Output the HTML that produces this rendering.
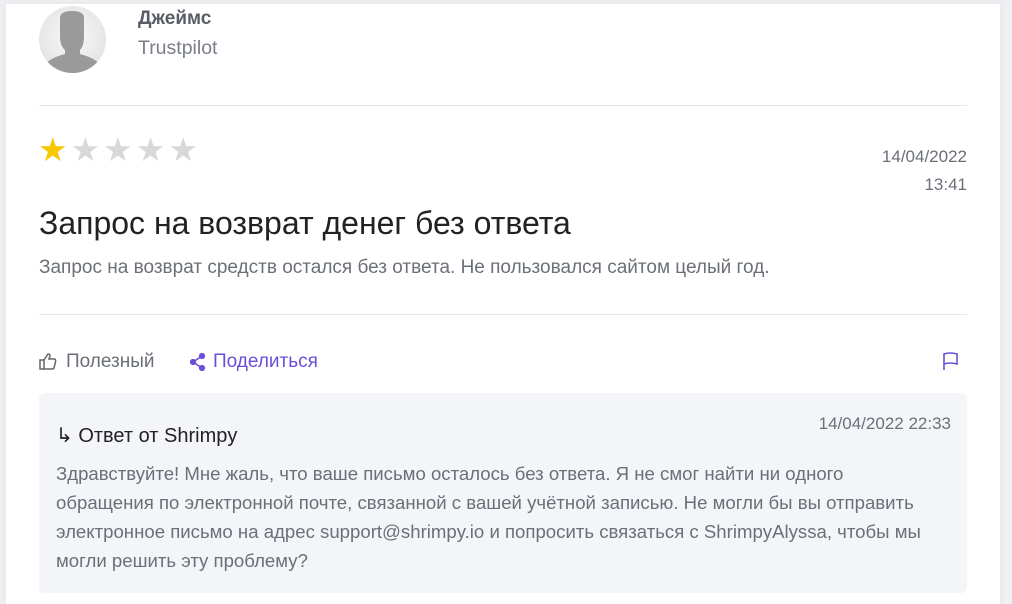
<!DOCTYPE html>
<html><head><meta charset="utf-8"><style>
*{margin:0;padding:0;box-sizing:border-box}
body{width:1012px;height:571px;overflow:hidden;background:#eef0f3;font-family:"Liberation Sans",sans-serif;position:relative}
.card{position:absolute;left:6px;top:4px;width:994px;height:600px;background:#fff;box-shadow:0 0 8px rgba(0,0,0,.06)}
.a{position:absolute;white-space:nowrap}
.hr{position:absolute;left:39px;width:928px;height:1px;background:#e6e6e6}
.g{color:#6b6f78}
</style></head><body>
<div class="card"></div>
<div class="a" style="left:39px;top:6px;width:67px;height:67px;border-radius:50%;background:radial-gradient(circle at 50% 45%,#fafafa,#dcdcdc);overflow:hidden">
<svg width="67" height="67" viewBox="0 0 67 67"><path d="M21 12 Q21 5 33 5 Q45 5 45 12 L45 30 Q45 40 41 44 L41 48 Q56 52 60 58 L62 67 L5 67 L7 58 Q11 52 26 48 L26 44 Q21 40 21 30 Z" fill="#9a9a9a"/></svg></div>
<div class="a" style="left:138px;top:8px;font-size:19px;font-weight:bold;color:#5a5d66">Джеймс</div>
<div class="a g" style="left:138px;top:37px;font-size:19.5px;color:#7a7e88">Trustpilot</div>
<div class="hr" style="top:105px"></div>
<div class="a" style="left:38px;top:132px;font-size:33px;letter-spacing:3px;line-height:36px"><span style="color:#f5c800">★</span><span style="color:#d8d8d8">★★★★</span></div>
<div class="a g" style="right:45px;top:143px;font-size:17px;text-align:right;line-height:28px">14/04/2022<br>13:41</div>
<div class="a" style="left:39px;top:205px;font-size:32px;color:#222">Запрос на возврат денег без ответа</div>
<div class="a g" style="left:39px;top:257px;font-size:19px">Запрос на возврат средств остался без ответа. Не пользовался сайтом целый год.</div>
<div class="hr" style="top:314px"></div>
<svg class="a" style="left:39px;top:352px" width="18" height="18" viewBox="0 0 18 18" fill="none" stroke="#666" stroke-width="1.5"><rect x="1" y="8" width="4" height="9"/><path d="M5 8 L9 2 Q11 2 11 4 L10 7 L16 7 Q17 8 16.5 10 L15 16 Q14.5 17 13 17 L5 17"/></svg>
<div class="a g" style="left:66px;top:351px;font-size:19px">Полезный</div>
<svg class="a" style="left:190px;top:353px" width="16" height="18" viewBox="0 0 16 18" fill="#6b4fd8" stroke="#6b4fd8" stroke-width="1.6"><circle cx="12" cy="3" r="2.3"/><circle cx="3" cy="9" r="2.3"/><circle cx="12" cy="15" r="2.3"/><path d="M12 3 L3 9 L12 15" fill="none"/></svg>
<div class="a" style="left:213px;top:351px;font-size:19px;color:#6b4fd8">Поделиться</div>
<svg class="a" style="left:942px;top:351px" width="18" height="20" viewBox="0 0 18 20" fill="none" stroke="#6b4fd8" stroke-width="1.6"><path d="M2 19 L2 3 Q8 1 15 3 L15 13 Q8 11 2 13"/></svg>
<div class="a" style="left:39px;top:393px;width:928px;height:200px;background:#f3f5f8;border-radius:6px"></div>
<div class="a" style="left:56px;top:423px;font-size:20px;color:#222">↳ Ответ от Shrimpy</div>
<div class="a g" style="right:61px;top:414px;font-size:17px">14/04/2022 22:33</div>
<div class="a g" style="left:56px;top:459px;font-size:18.6px;line-height:29px">Здравствуйте! Мне жаль, что ваше письмо осталось без ответа. Я не смог найти ни одного<br>обращения по электронной почте, связанной с вашей учётной записью. Не могли бы вы отправить<br>электронное письмо на адрес support@shrimpy.io и попросить связаться с ShrimpyAlyssa, чтобы мы<br>могли решить эту проблему?</div>
</body></html>
